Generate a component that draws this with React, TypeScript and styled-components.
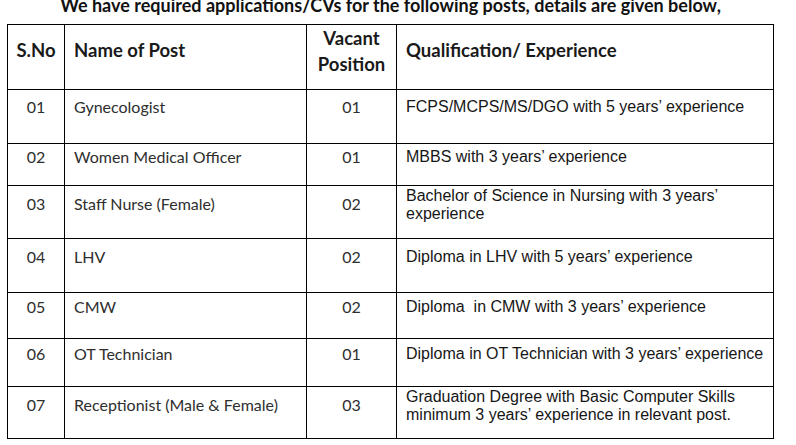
import React from "react";
import styled, { createGlobalStyle } from "styled-components";

const Global = createGlobalStyle`
  html, body { margin: 0; padding: 0; background: #ffffff; }
  body { overflow: hidden; }
`;

const Page = styled.div`
  display: flex;
  flex-direction: column;
  width: 796px;
  padding: 0 0 0 7px;
  box-sizing: border-box;
  background: #ffffff;
  overflow: hidden;
`;

const Sheet = styled.div`
  display: flex;
  flex-direction: column;
  width: 767px;
`;

const Title = styled.div`
  font-family: Lato, "Liberation Sans", sans-serif;
  font-weight: 700;
  font-size: 18px;
  line-height: 24px;
  height: 17px;
  color: #111;
  text-align: center;
  white-space: nowrap;
  margin-top: -7px;
  margin-bottom: 14px;
`;

const Table = styled.div`
  border: 1px solid #000;
  box-sizing: border-box;
  width: 767px;
`;

const Row = styled.div<{ $h: number }>`
  display: grid;
  grid-template-columns: 57px 242px 90px 376px;
  height: ${(p) => p.$h}px;
  border-bottom: 1px solid #000;
  box-sizing: border-box;
  &:last-child {
    border-bottom: none;
  }
`;

const Cell = styled.div<{ $align?: "left" | "center"; $pad: number; $last?: boolean }>`
  box-sizing: border-box;
  border-right: ${(p) => (p.$last ? "none" : "1px solid #000")};
  padding-top: ${(p) => p.$pad}px;
  padding-left: ${(p) => (p.$align === "center" ? 0 : 9)}px;
  text-align: ${(p) => p.$align ?? "left"};
`;

const HeadText = styled.div`
  font-family: Lato, "Liberation Sans", sans-serif;
  font-weight: 700;
  font-size: 18.5px;
  line-height: 26px;
  color: #1a1a1a;
  white-space: nowrap;
`;

const BodyText = styled.div`
  font-family: Lato, "Liberation Sans", sans-serif;
  font-size: 16px;
  line-height: 18px;
  color: #2e2e2e;
  white-space: nowrap;
`;

const QualText = styled.div`
  font-family: "Liberation Sans", Arial, sans-serif;
  font-size: 16px;
  line-height: 18px;
  color: #161616;
  white-space: pre;
`;

type Post = {
  sn: string;
  name: string;
  vac: string;
  qual: string;
  h: number;
  pad: number;
  qpad?: number;
};

const posts: Post[] = [
  { sn: "01", name: "Gynecologist", vac: "01", qual: "FCPS/MCPS/MS/DGO with 5 years’ experience", h: 54, pad: 8 },
  { sn: "02", name: "Women Medical Officer", vac: "01", qual: "MBBS with 3 years’ experience", h: 42, pad: 4 },
  {
    sn: "03",
    name: "Staff Nurse (Female)",
    vac: "02",
    qual: "Bachelor of Science in Nursing with 3 years’\nexperience",
    h: 53,
    pad: 9,
    qpad: 1,
  },
  { sn: "04", name: "LHV", vac: "02", qual: "Diploma in LHV with 5 years’ experience", h: 54, pad: 9 },
  { sn: "05", name: "CMW", vac: "02", qual: "Diploma  in CMW with 3 years’ experience", h: 46, pad: 5 },
  { sn: "06", name: "OT Technician", vac: "01", qual: "Diploma in OT Technician with 3 years’ experience", h: 48, pad: 6 },
  {
    sn: "07",
    name: "Receptionist (Male & Female)",
    vac: "03",
    qual: "Graduation Degree with Basic Computer Skills\nminimum 3 years’ experience in relevant post.",
    h: 51,
    pad: 9,
    qpad: 1,
  },
];

export default function App() {
  return (
    <Page>
      <Global />
      <Sheet>
        <Title>We have required applications/CVs for the following posts, details are given below,</Title>
        <Table>
          <Row $h={65}>
            <Cell $align="center" $pad={12}>
              <HeadText>S.No</HeadText>
            </Cell>
            <Cell $pad={12}>
              <HeadText>Name of Post</HeadText>
            </Cell>
            <Cell $align="center" $pad={0}>
              <HeadText>Vacant</HeadText>
              <HeadText>Position</HeadText>
            </Cell>
            <Cell $pad={12} $last>
              <HeadText>Qualification/ Experience</HeadText>
            </Cell>
          </Row>
          {posts.map((p) => (
            <Row key={p.sn} $h={p.h}>
              <Cell $align="center" $pad={p.pad}>
                <BodyText>{p.sn}</BodyText>
              </Cell>
              <Cell $pad={p.pad}>
                <BodyText>{p.name}</BodyText>
              </Cell>
              <Cell $align="center" $pad={p.pad}>
                <BodyText>{p.vac}</BodyText>
              </Cell>
              <Cell $pad={p.qpad ?? p.pad} $last>
                <QualText>{p.qual}</QualText>
              </Cell>
            </Row>
          ))}
        </Table>
      </Sheet>
    </Page>
  );
}
